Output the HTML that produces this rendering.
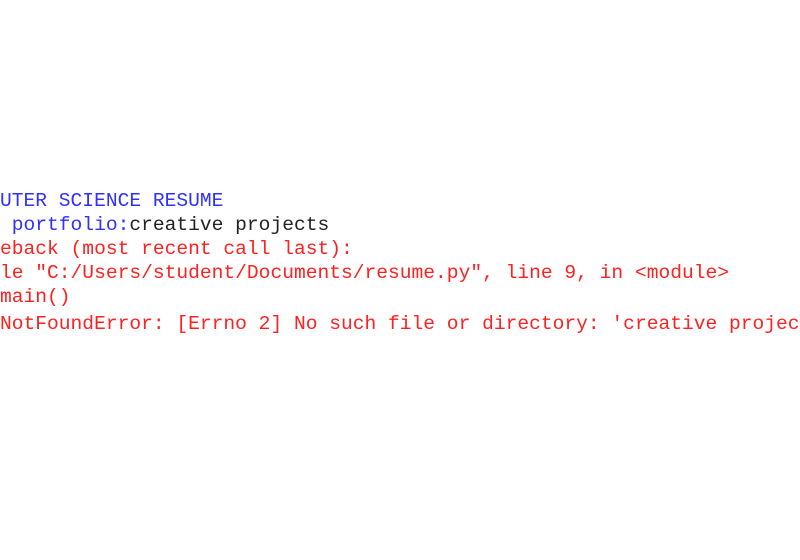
<!DOCTYPE html>
<html><head><style>
html,body{margin:0;padding:0;width:800px;height:560px;background:#fff;overflow:hidden}
.l{position:absolute;left:0;white-space:pre;font-family:"Liberation Mono","Courier New",monospace;font-size:19.6px;line-height:24px;color:#ff2020}
.b{color:#3030ff}.k{color:#222}
</style></head><body>
<div class="l b" style="top:189px">UTER SCIENCE RESUME</div>
<div class="l" style="top:213px"><span class="b"> portfolio:</span><span class="k">creative projects</span></div>
<div class="l" style="top:237px">eback (most recent call last):</div>
<div class="l" style="top:261px">le "C:/Users/student/Documents/resume.py", line 9, in &lt;module&gt;</div>
<div class="l" style="top:285px">main()</div>
<div class="l" style="top:312px">NotFoundError: [Errno 2] No such file or directory: 'creative projects'</div>
</body></html>
